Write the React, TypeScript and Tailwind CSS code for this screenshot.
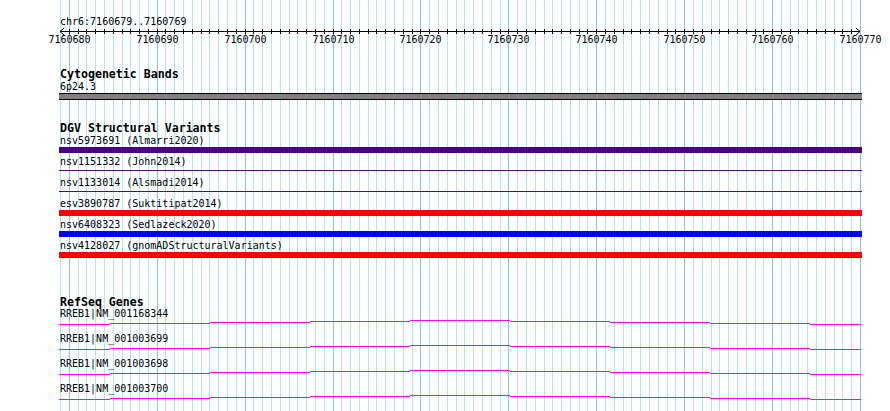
import React from 'react';

const START = 7160679;
const END = 7160769;
const LEFT = 60;
const WIDTH = 800;
const BP = WIDTH / (END - START + 1);
const xAt = (k: number) => Math.round(LEFT + k * BP);
const BASES = END - START + 1;

const variants = [
  { id: 'nsv5973691', study: 'Almarri2020', color: '#4b0082', thick: true },
  { id: 'nsv1151332', study: 'John2014', color: '#4f0a8c', thick: false },
  { id: 'nsv1133014', study: 'Alsmadi2014', color: '#4f0a8c', thick: false },
  { id: 'esv3890787', study: 'Suktitipat2014', color: '#ff0000', thick: true },
  { id: 'nsv6408323', study: 'Sedlazeck2020', color: '#0000ff', thick: true },
  { id: 'nsv4128027', study: 'gnomADStructuralVariants', color: '#ff0000', thick: true },
];

const genes = ['RREB1|NM_001168344', 'RREB1|NM_001003699', 'RREB1|NM_001003698', 'RREB1|NM_001003700'];

// intron "hat" drawn as stepped segments, like the low-res render
const steps = [59, 110, 210, 310, 410, 510, 610, 710, 810, 861];
const rise = [0, 1, 2, 3, 4, 3, 2, 1, 0];

const GridLines = () => (
  <svg className="absolute inset-0" width={890} height={411} shapeRendering="crispEdges">
    {Array.from({ length: BASES + 1 }, (_, k) => {
      const major = (START + k) % 10 === 0;
      return (
        <rect key={k} x={xAt(k)} y={0} width={1} height={411} fill={major ? '#86c6ee' : '#aee8ee'} />
      );
    })}
  </svg>
);

const Ruler = () => {
  const majors = Array.from({ length: BASES + 1 }, (_, k) => k).filter(k => (START + k) % 10 === 0);
  return (
    <div className="relative h-[20px] w-[800px]">
      <svg className="absolute left-0 top-0 overflow-visible" width={800} height={8} shapeRendering="crispEdges">
        <rect x={0} y={4} width={800} height={1} fill="#000" />
        {Array.from({ length: BASES - 1 }, (_, i) => i + 1).map(k => (
          <rect key={k} x={xAt(k) - LEFT} y={2} width={1} height={5} fill="#000" />
        ))}
        <path d="M4 1 L0 4.5 L4 8" fill="none" stroke="#000" strokeWidth={1} shapeRendering="auto" />
        <path d="M796 1 L800 4.5 L796 8" fill="none" stroke="#000" strokeWidth={1} shapeRendering="auto" />
      </svg>
      {majors.map(k => (
        <span
          key={k}
          className="absolute top-[8px] -translate-x-1/2 text-[10px] leading-[10px] whitespace-nowrap"
          style={{ left: xAt(k) - LEFT + 0.5 }}
        >
          {START + k}
        </span>
      ))}
    </div>
  );
};

const TrackTitle = ({ children, className = '' }: { children: React.ReactNode; className?: string }) => (
  <div className={`h-[12px] text-[11.6px] leading-[12px] font-bold whitespace-nowrap ${className}`}>{children}</div>
);

export default function App() {
  return (
    <div className="relative h-[411px] w-[890px] overflow-hidden bg-white text-black font-['DejaVu_Sans_Mono',monospace]">
      <GridLines />

      <div className="relative pl-[60px] pt-[17px]">
        {/* Ruler */}
        <div className="h-[10px] text-[10px] leading-[10px]">chr6:7160679..7160769</div>
        <Ruler />

        {/* Cytogenetic Bands */}
        <TrackTitle className="mt-[21px]">Cytogenetic Bands</TrackTitle>
        <div className="mt-[2px] h-[10px] text-[10px] leading-[10px]">6p24.3</div>
        <div className="mt-px -ml-px h-[7px] w-[803px] border-y border-black bg-[#808080]" />

        {/* DGV Structural Variants */}
        <TrackTitle className="mt-[22px]">DGV Structural Variants</TrackTitle>
        <div className="mt-[2px]">
          {variants.map(v => (
            <div key={v.id} className="h-[21px]">
              <div className="h-[11px] text-[10px] leading-[10px] whitespace-nowrap">
                {v.id} ({v.study})
              </div>
              {v.thick ? (
                <div className="-ml-px h-[6px] w-[803px]" style={{ backgroundColor: v.color }} />
              ) : (
                <div className="-ml-px h-[6px] w-[803px] pt-[2px]">
                  <div className="h-px w-full" style={{ backgroundColor: v.color }} />
                </div>
              )}
            </div>
          ))}
        </div>

        {/* RefSeq Genes */}
        <TrackTitle className="mt-[34px]">RefSeq Genes</TrackTitle>
        <div className="mt-px">
          {genes.map(g => (
            <div key={g} className="h-[25px]">
              <div className="h-[10px] text-[10px] leading-[10px] whitespace-nowrap">{g}</div>
              <svg className="-ml-px block" width={803} height={10} shapeRendering="crispEdges">
                {rise.map((r, i) => (
                  <rect
                    key={i}
                    x={steps[i] - 59}
                    y={5 - r}
                    width={steps[i + 1] - steps[i]}
                    height={1}
                    fill="#ff00ff"
                  />
                ))}
              </svg>
            </div>
          ))}
        </div>
      </div>
    </div>
  );
}
